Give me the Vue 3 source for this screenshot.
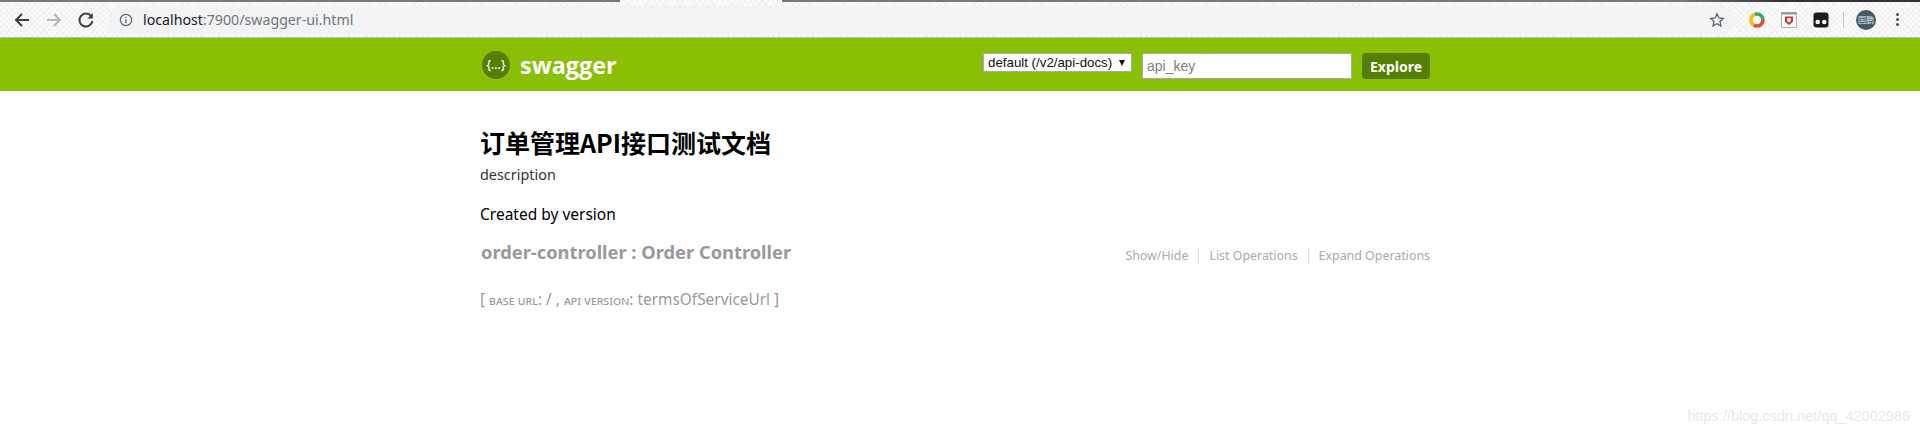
<template>
  <div class="page">
    <div class="chrome">
      <div class="tabstrip">
        <div class="strip-dark left"></div>
        <div class="strip-gap"></div>
        <div class="strip-dark right"></div>
      </div>

      <div class="toolbar">
        <svg class="nav" width="18" height="18" viewBox="0 0 18 18">
          <path d="M16 9H3M9 3 3 9l6 6" fill="none" stroke="#3c4043" stroke-width="2" />
        </svg>
        <svg class="nav" width="18" height="18" viewBox="0 0 18 18">
          <path d="M2 9h13M9 3l6 6-6 6" fill="none" stroke="#b4b6b8" stroke-width="2" />
        </svg>
        <svg class="nav" width="18" height="18" viewBox="0 0 18 18">
          <path d="M14.2 5.2A6.5 6.5 0 1 0 15.4 10" fill="none" stroke="#3c4043" stroke-width="2" />
          <path d="M15.8 2v5.4h-5.4z" fill="#3c4043" />
        </svg>

        <div class="omnibox">
          <svg class="info" width="14" height="14" viewBox="0 0 14 14">
            <circle cx="7" cy="7" r="5.6" fill="none" stroke="#5f6368" stroke-width="1.2" />
            <path d="M7 6.2v4M7 3.8v1.3" stroke="#5f6368" stroke-width="1.3" />
          </svg>
          <span class="url"><span class="host">localhost</span>:7900/swagger-ui.html</span>
          <svg class="star" width="16" height="16" viewBox="0 0 16 16">
            <path d="m8 1.8 1.9 4.2 4.5.5-3.4 3 1 4.5L8 11.7 4 14l1-4.5-3.4-3 4.5-.5z" fill="none" stroke="#5f6368" stroke-width="1.3" />
          </svg>
        </div>

        <div class="extensions">
          <svg width="16" height="16" viewBox="0 0 16 16">
            <circle cx="8" cy="8" r="6" fill="none" stroke="#e8493a" stroke-width="3.6" stroke-dasharray="12.6 25.2" />
            <circle cx="8" cy="8" r="6" fill="none" stroke="#f5b921" stroke-width="3.6" stroke-dasharray="12.6 25.2" stroke-dashoffset="-12.6" />
            <circle cx="8" cy="8" r="6" fill="none" stroke="#43a857" stroke-width="3.6" stroke-dasharray="12.6 25.2" stroke-dashoffset="-25.2" />
          </svg>
          <svg width="16" height="16" viewBox="0 0 16 16">
            <path d="M.5.5h15v15H.5z" fill="#fff" stroke="#a9b1b5" />
            <path d="M.5.5h15v2H.5z" fill="#8b979c" />
            <path d="M4 4.5h8v5.2L8 13 4 9.7z" fill="#d32f2f" />
            <path d="M6.2 6h3.600v3L8 10.5 6.200 9z" fill="#fff" />
          </svg>
          <svg width="16" height="16" viewBox="0 0 16 16">
            <rect x=".5" y=".5" width="15" height="15" rx="3" fill="#1c1c1c" />
            <circle cx="4.7" cy="10" r="2.3" fill="#fff" />
            <circle cx="11.3" cy="10" r="2.3" fill="#fff" />
          </svg>
          <div class="ext-sep"></div>
          <div class="avatar">国鹏</div>
          <div class="dots"><i></i><i></i><i></i></div>
        </div>
      </div>
    </div>

    <header class="swagger-header">
      <div class="container header-row">
        <div class="brand">
          <div class="logo">{...}</div>
          <span class="brand-name">swagger</span>
        </div>
        <form class="api-selector" @submit.prevent>
          <div class="select-box">
            <span>default (/v2/api-docs)</span>
            <span class="caret"></span>
          </div>
          <input class="api-key" placeholder="api_key" />
          <button class="explore" type="button">Explore</button>
        </form>
      </div>
    </header>

    <main class="container content">
      <h1 class="title">订单管理API接口测试文档</h1>
      <p class="description">description</p>
      <p class="created">Created by version</p>

      <div class="resource">
        <h2 class="resource-name">order-controller : Order Controller</h2>
        <ul class="resource-links">
          <li v-for="link in links" :key="link">{{ link }}</li>
        </ul>
      </div>

      <p class="base">
        [ <span class="small">base url</span>: / , <span class="small">api version</span>: termsOfServiceUrl ]
      </p>
    </main>

    <div class="watermark">https://blog.csdn.net/qq_42002986</div>
  </div>
</template>

<script setup>
const links = ['Show/Hide', 'List Operations', 'Expand Operations']
</script>

<style>
html,
body {
  margin: 0;
  background: #fff;
  overflow: hidden;
}
</style>

<style scoped>
.page {
  position: relative;
  height: 433px;
  overflow: hidden;
  font-family: "Noto Sans", "Open Sans", sans-serif;
  background: #fff;
}

/* browser bar */
.chrome {
  background-color: #fbfbfb;
  background-image: repeating-linear-gradient(45deg, #f1f1f1 0 1px, transparent 1px 4px),
    repeating-linear-gradient(-45deg, #f1f1f1 0 1px, transparent 1px 4px);
}
.tabstrip {
  display: flex;
  height: 2px;
}
.strip-dark.left {
  width: 620px;
  background: #777;
}
.strip-gap {
  width: 162px;
}
.strip-dark.right {
  flex: 1;
  background: linear-gradient(to right, #777, #777 900px, #333 1000px);
}

.toolbar {
  display: flex;
  align-items: center;
  height: 36px;
  box-sizing: border-box;
  padding-left: 13px;
  border-bottom: 1px solid #b9bdb9;
}
.nav {
  margin-right: 14px;
}
.omnibox {
  display: flex;
  align-items: center;
  width: 1626px;
  height: 28px;
  padding: 0 10px;
  box-sizing: border-box;
  border-radius: 14px;
  background: #f1f3f4;
}
.info {
  margin-right: 10px;
}
.url {
  flex: 1;
  font-size: 14.2px;
  color: #70757a;
}
.host {
  color: #202124;
}
.extensions {
  display: flex;
  align-items: center;
  margin-left: 14px;
  gap: 16px;
}
.ext-sep {
  width: 1px;
  height: 16px;
  margin: 0 -4px 0 -2px;
  background: #c4c6c8;
}
.avatar {
  display: flex;
  align-items: center;
  justify-content: center;
  width: 20px;
  height: 20px;
  border-radius: 50%;
  background: #455a64;
  color: #dfe6e9;
  font-family: "Noto Sans CJK SC", sans-serif;
  font-size: 8px;
}
.dots {
  display: flex;
  flex-direction: column;
  gap: 2px;
  margin-left: 4px;
}
.dots i {
  width: 3px;
  height: 3px;
  border-radius: 50%;
  background: #4a4d50;
}

.container {
  width: 960px;
  margin: 0 auto;
  box-sizing: border-box;
}

/* swagger header */
.swagger-header {
  height: 53px;
  background: #89bf04;
}
.header-row {
  display: flex;
  height: 100%;
}
.brand {
  display: flex;
  align-items: center;
  gap: 10px;
  margin-left: 2px;
}
.logo {
  display: flex;
  align-items: center;
  justify-content: center;
  width: 28px;
  height: 28px;
  border-radius: 50%;
  background: #547f00;
  color: #fff;
  font-size: 12px;
  font-weight: 500;
}
.brand-name {
  font-family: "Open Sans", sans-serif;
  font-size: 23.4px;
  font-weight: 700;
  color: #fff;
}
.api-selector {
  display: flex;
  align-items: flex-start;
  gap: 10px;
  margin: 15px 10px 0 auto;
}
.select-box {
  display: flex;
  align-items: center;
  justify-content: space-between;
  width: 149px;
  height: 19px;
  padding: 0 6px 0 4px;
  box-sizing: border-box;
  border: 1px solid #a9a9a9;
  background: #fff;
  color: #111;
  font-family: "Liberation Sans", sans-serif;
  font-size: 13.3px;
  white-space: nowrap;
}
.caret {
  width: 0;
  height: 0;
  border-left: 3.5px solid transparent;
  border-right: 3.5px solid transparent;
  border-top: 6px solid #111;
}
.api-key {
  width: 210px;
  height: 26px;
  padding: 0 4px;
  box-sizing: border-box;
  border: 1px solid #a9a9a9;
  outline: none;
  font-family: "Liberation Sans", sans-serif;
  font-size: 14px;
  border-radius: 0;
}
.api-key::placeholder {
  color: #808080;
  opacity: 1;
}
.explore {
  width: 68px;
  height: 26px;
  padding: 0;
  border: none;
  border-radius: 4px;
  background: #547f00;
  color: #fff;
  font-family: "Noto Sans", sans-serif;
  font-size: 14px;
  font-weight: 700;
}

/* page content */
.content {
  padding-top: 34px;
}
.title {
  margin: 0;
  font-family: "Noto Sans CJK SC", sans-serif;
  font-size: 25px;
  line-height: 34px;
  font-weight: 700;
  color: #000;
}
.description {
  margin: 6px 0 0;
  font-size: 14.4px;
  line-height: 20px;
  color: #333;
}
.created {
  margin: 19px 0 0;
  font-size: 15.5px;
  line-height: 20px;
  color: #000;
}
.resource {
  display: flex;
  justify-content: space-between;
  align-items: flex-start;
  margin-top: 16px;
}
.resource-name {
  margin: 0 0 0 1px;
  font-size: 18.3px;
  line-height: 24px;
  font-weight: 700;
  color: #999;
}
.resource-links {
  display: flex;
  list-style: none;
  margin: 8px 10px 0 0;
  padding: 0;
  font-size: 12.4px;
  line-height: 16px;
  color: #aaa;
}
.resource-links li {
  padding: 0 10px;
  border-right: 1px solid #ddd;
}
.resource-links li:last-child {
  padding-right: 0;
  border-right: none;
}
.base {
  margin: 26px 0 0;
  font-size: 15.4px;
  line-height: 20px;
  color: #999;
}
.small {
  font-size: 13px;
  font-variant: small-caps;
}

.watermark {
  position: absolute;
  right: 10px;
  bottom: 9px;
  font-family: "Liberation Sans", sans-serif;
  font-size: 14.5px;
  color: #e9e9e9;
}
</style>
